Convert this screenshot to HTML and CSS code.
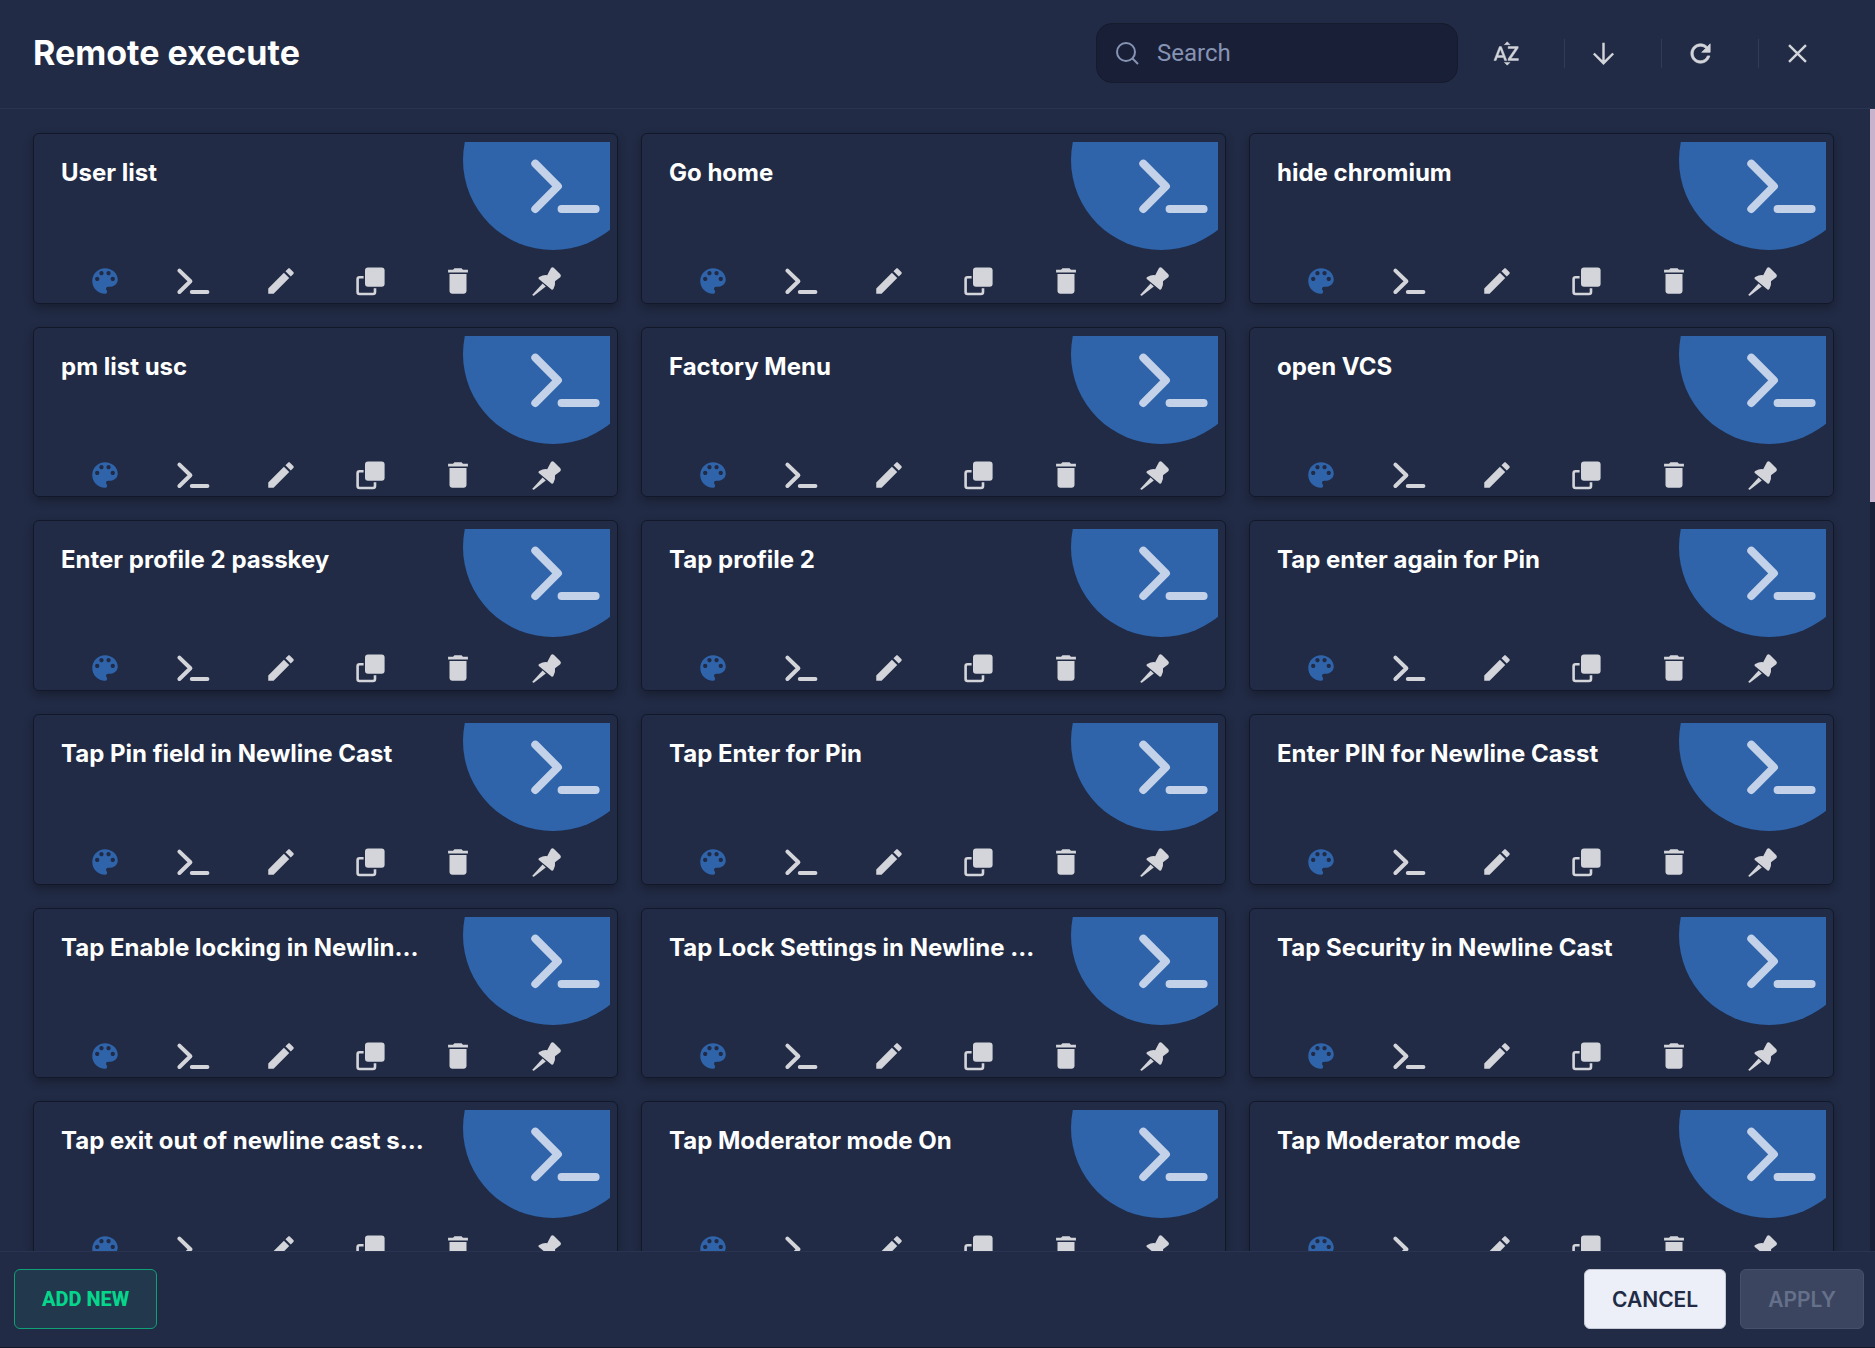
FILE: index.html
```html
<!DOCTYPE html>
<html lang="en">
  <head>
    <meta charset="UTF-8" />
    <meta name="viewport" content="width=device-width, initial-scale=1.0" />
    <title>Remote execute</title>
    <link rel="stylesheet" href="styles.css">
  </head>
  <body>
    <svg class="sprite" aria-hidden="true">
      <symbol id="badge" viewBox="0 0 147 108">
        <circle cx="90" cy="18" r="90" fill="#2f64ab" />
        <path d="M72.3 21.700L94.900 44.300L72.300 67M98.600 67H132.600" fill="none" stroke="#c3d2e8" stroke-width="8" stroke-linecap="round" stroke-linejoin="round" />
      </symbol>
      <symbol id="palette" viewBox="0 0 24 24">
        <path d="M12 3c-4.97 0-9 4.03-9 9s4.03 9 9 9c.83 0 1.5-.67 1.5-1.5 0-.39-.15-.74-.39-1.01-.23-.26-.38-.61-.38-.99 0-.83.67-1.5 1.5-1.5H16c2.76 0 5-2.24 5-5 0-4.42-4.03-8-9-8zm-5.5 9c-.83 0-1.5-.67-1.5-1.5S5.67 9 6.5 9 8 9.67 8 10.5 7.33 12 6.5 12zm3-4C8.67 8 8 7.33 8 6.5S8.67 5 9.5 5s1.5.67 1.5 1.5S10.33 8 9.5 8zm5 0c-.83 0-1.5-.67-1.5-1.5S13.67 5 14.5 5s1.5.67 1.5 1.5S15.33 8 14.5 8zm3 4c-.83 0-1.5-.67-1.5-1.5S16.67 9 17.5 9s1.5.67 1.5 1.5-.67 1.5-1.5 1.5z" />
      </symbol>
      <symbol id="terminal" viewBox="0 0 34 34">
        <path d="M3.4 6.6L14.4 17.3L3.4 28M15.8 28H31.4" fill="none" stroke="currentColor" stroke-width="4" stroke-linecap="round" stroke-linejoin="round" />
      </symbol>
      <symbol id="edit" viewBox="0 0 24 24">
        <path d="M3 17.25V21h3.75L17.81 9.94l-3.75-3.75L3 17.25zM20.71 7.04c.39-.39.39-1.02 0-1.41l-2.34-2.34c-.39-.39-1.02-.39-1.41 0l-1.83 1.83 3.75 3.75 1.83-1.83z" />
      </symbol>
      <symbol id="copy" viewBox="0 0 34 34">
        <rect x="12" y="3.4" width="19.6" height="19.4" rx="3" />
        <path d="M10.6 13.3H6.6a2 2 0 0 0-2 2V28a2 2 0 0 0 2 2H20a2 2 0 0 0 2-2V24.2" fill="none" stroke="currentColor" stroke-width="2.6" />
      </symbol>
      <symbol id="trash" viewBox="0 0 24 24">
        <path d="M6 19c0 1.1.9 2 2 2h8c1.1 0 2-.9 2-2V7H6v12zM19 4h-3.5l-1-1h-5l-1 1H5v2h14V4z" />
      </symbol>
      <symbol id="pin" viewBox="0 0 34 34">
        <path d="M22 4q1.5-1.3 3 0l6.3 6.3q1.3 1.5 0 3L26 17.3q.6 4.5-1.6 7.7q-1 1.3-2.2.2L9.8 15q-1-1.2.4-2q4.5-2.5 8-1.8z" />
        <path d="M13.6 19.4L16.8 22.4L5.2 31.4q-2.2.8-1.4-1.2z" />
      </symbol>
    </svg>

    <header class="header">
      <h1>Remote execute</h1>
      <div class="header__tools">
        <label class="search">
          <svg viewBox="0 0 24 24" aria-hidden="true"><circle cx="11" cy="11" r="9" /><path d="M17 17L23 23" /></svg>
          <input type="text" placeholder="Search" aria-label="Search">
        </label>
        <div class="tool-list">
          <button type="button" aria-label="Sort">
            <svg viewBox="0 0 24 24" fill="currentColor" stroke="currentColor" stroke-width=".4"><path d="M14.94 4.66h-4.72l2.36-2.36zM10.25 19.37h4.66l-2.33 2.33zM6.1 6.27L1.6 17.73h1.84l.92-2.45h5.11l.92 2.45h1.84L7.74 6.27zM4.97 13.64l1.94-5.18 1.94 5.18zM15.73 16.14h6.12v1.59h-8.53v-1.29l5.92-8.56h-5.88v-1.6h8.3v1.26z" /></svg>
          </button>
          <button type="button" aria-label="Download">
            <svg viewBox="0 0 24 24" class="line"><path d="M12 3V19.5M4 12L12 20L20 12" /></svg>
          </button>
          <button type="button" aria-label="Refresh">
            <svg viewBox="0 0 24 24" fill="currentColor" stroke="currentColor" stroke-width=".6"><path d="M17.65 6.35C16.2 4.9 14.21 4 12 4c-4.42 0-7.99 3.58-7.99 8s3.57 8 7.99 8c3.73 0 6.84-2.55 7.73-6h-2.08c-.82 2.33-3.04 4-5.65 4-3.31 0-6-2.69-6-6s2.69-6 6-6c1.66 0 3.14.69 4.22 1.78L13 11h7V4l-2.35 2.35z" /></svg>
          </button>
          <button type="button" aria-label="Close">
            <svg viewBox="0 0 24 24" class="line"><path d="M5 5L19 19M19 5L5 19" /></svg>
          </button>
        </div>
      </div>
    </header>

    <main class="content">
      <div class="card-list" id="cards"></div>
      <div class="scrollbar"><div class="scrollbar__thumb"></div></div>
    </main>

    <footer class="footer">
      <button type="button" class="btn btn--add">ADD NEW</button>
      <div class="footer__right">
        <button type="button" class="btn btn--cancel">CANCEL</button>
        <button type="button" class="btn btn--apply" disabled>APPLY</button>
      </div>
    </footer>
    <script src="script.js"></script>
  </body>
</html>
```
FILE: styles.css
```css
* {
  box-sizing: border-box;
}

body {
  margin: 0;
  height: 100vh;
  display: flex;
  flex-direction: column;
  background-color: #212b45;
  border-bottom: 1px solid #12172a;
  color: #fff;
  font-family: Inter, Roboto, sans-serif;
}

button {
  border: none;
  background: none;
  cursor: pointer;
  font-family: inherit;
}

.sprite {
  display: none;
}

/* Header */
.header {
  display: flex;
  align-items: center;
  justify-content: space-between;
  height: 109px;
  padding: 0 39px 2px 33px;
  border-bottom: 1px solid #2a3450;
}

.header h1 {
  margin: 0;
  font-size: 34px;
  line-height: 40px;
  font-weight: 700;
}

.header__tools {
  display: flex;
  align-items: center;
  gap: 9px;
}

.search {
  display: flex;
  align-items: center;
  gap: 18px;
  width: 362px;
  height: 60px;
  padding: 0 18px;
  background-color: #1a1f38;
  border: 1px solid #151a2d;
  border-radius: 16px;
}

.search svg {
  width: 24px;
  height: 24px;
  fill: none;
  stroke: #8694b3;
  stroke-width: 2;
}

.search input {
  flex: 1;
  min-width: 0;
  padding: 0;
  border: none;
  outline: none;
  background: none;
  color: #fff;
  font-family: Roboto, sans-serif;
  font-size: 24px;
}

.search input::placeholder {
  color: #8694b3;
}

.tool-list {
  display: flex;
  gap: 19px;
}

.tool-list button {
  display: flex;
  align-items: center;
  justify-content: center;
  width: 78px;
  height: 29px;
  padding: 0;
  color: #d3d5db;
}

.tool-list button + button {
  border-left: 1px solid #323c56;
}

.tool-list svg {
  flex: none;
  width: 29px;
  height: 29px;
}

.line {
  fill: none;
  stroke: currentColor;
  stroke-width: 2;
}

/* Cards */
.content {
  flex: 1;
  min-height: 0;
  display: flex;
}

.card-list {
  flex: 1;
  display: grid;
  grid-template-columns: repeat(3, minmax(0, 1fr));
  align-content: start;
  gap: 23px;
  padding: 24px 36px 24px 33px;
  overflow-y: auto;
  scrollbar-width: none;
}

.card {
  aspect-ratio: 24 / 7;
  padding: 8px 7px 0 27px;
  border: 1px solid #12172a;
  border-radius: 6px;
  box-shadow: 0 4px 10px rgba(0, 0, 0, 0.3);
}

.card__top {
  display: flex;
  justify-content: space-between;
}

.card h2 {
  margin: 16px 0 0;
  font-size: 24px;
  line-height: 30px;
  font-weight: 700;
  white-space: nowrap;
}

.card__badge {
  flex: none;
  width: 147px;
  height: 108px;
}

.card__actions {
  display: flex;
  margin: 13px 20px 0 0;
}

.card__actions button {
  flex: 1;
  height: 36px;
  padding: 0;
  color: #d3d5db;
}

.card__actions svg {
  display: block;
  width: 34px;
  height: 34px;
  margin: 0 auto;
  fill: currentColor;
}

.card__actions button:first-child {
  color: #2f64ab;
}

.card__actions button:hover {
  opacity: 0.8;
}

.scrollbar {
  width: 5px;
  background-color: #1a1f38;
}

.scrollbar__thumb {
  height: 393px;
  background-color: #c8b2cc;
}

/* Footer */
.footer {
  display: flex;
  align-items: flex-start;
  justify-content: space-between;
  height: 96px;
  padding: 17px 11px 0 14px;
  border-top: 1px solid #2a3450;
}

.footer__right {
  display: flex;
  gap: 14px;
}

.btn {
  height: 60px;
  padding: 0 27px;
  border: 1px solid;
  border-radius: 6px;
  font-size: 21px;
  font-weight: 600;
}

.btn--add {
  color: #05d68c;
  background-color: #21384d;
  border-color: #10a077;
  font-family: Roboto, sans-serif;
  font-size: 20px;
  font-weight: 800;
}

.btn--cancel {
  color: #212b45;
  background-color: #eceff8;
  border-color: #c5c9d6;
}

.btn--apply {
  color: #65708a;
  background-color: #3b455f;
  border-color: #465069;
}
```
FILE: script.js
```js
const titles = [
  "User list",
  "Go home",
  "hide chromium",
  "pm list usc",
  "Factory Menu",
  "open VCS",
  "Enter profile 2 passkey",
  "Tap profile 2",
  "Tap enter again for Pin",
  "Tap Pin field in Newline Cast",
  "Tap Enter for Pin",
  "Enter PIN for Newline Casst",
  "Tap Enable locking in Newlin...",
  "Tap Lock Settings in Newline ...",
  "Tap Security in Newline Cast",
  "Tap exit out of newline cast s...",
  "Tap Moderator mode On",
  "Tap Moderator mode",
];
const actions = ["palette", "terminal", "edit", "copy", "trash", "pin"];

const buttons = actions
  .map((name) => `<button type="button" aria-label="${name}"><svg><use href="#${name}" /></svg></button>`)
  .join("");

document.getElementById("cards").innerHTML = titles
  .map(
    (title) => `
      <article class="card">
        <div class="card__top">
          <h2>${title}</h2>
          <svg class="card__badge" aria-hidden="true"><use href="#badge" /></svg>
        </div>
        <div class="card__actions">${buttons}</div>
      </article>`
  )
  .join("");
```
